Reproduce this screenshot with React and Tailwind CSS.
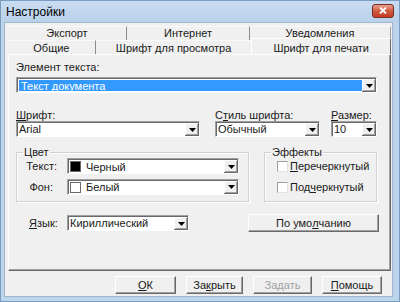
import { useState } from 'react'

const font = { fontFamily: '"Liberation Sans", Arial, sans-serif' }

function Arrow() {
  return (
    <svg width="7" height="4" viewBox="0 0 7 4" className="block">
      <path d="M0 0h7L3.5 4z" fill="#000" />
    </svg>
  )
}

function DropBtn() {
  return (
    <div className="w-[14px] h-full bg-[#f0f0f0] flex items-center justify-center shadow-[inset_-1px_-1px_0_#696969,inset_1px_1px_0_#ffffff,inset_-2px_-2px_0_#a0a0a0]">
      <Arrow />
    </div>
  )
}

function Combo({ width, children, selected }) {
  return (
    <div
      className="h-[16px] flex bg-white border border-t-[#a0a0a0] border-l-[#a0a0a0] border-r-white border-b-white shadow-[inset_1px_1px_0_#696969]"
      style={{ width }}
    >
      <div className={`flex-1 flex items-center pl-[2px] pt-px overflow-hidden ${selected ? 'bg-[#3399ff] text-white ml-[2px] mt-[2px] mb-px' : ''}`}>
        {children}
      </div>
      <div className="pt-px pb-0 h-full">
        <DropBtn />
      </div>
    </div>
  )
}

function Btn({ children, disabled, width }) {
  return (
    <div
      className={`h-[18px] flex items-center justify-center bg-[#f0f0f0] border border-t-white border-l-white border-r-[#696969] border-b-[#696969] shadow-[inset_-1px_-1px_0_#a0a0a0] ${disabled ? 'text-[#a0a0a0]' : 'text-[#1a1a1a]'}`}
      style={{ width }}
    >
      {children}
    </div>
  )
}

function Group({ title, width, children }) {
  return (
    <div
      className="relative h-[50px] border border-[#d0d0d0] shadow-[1px_1px_0_#ffffff,inset_1px_1px_0_#ffffff]"
      style={{ width }}
    >
      <span className="absolute -top-[7px] left-[6px] px-px bg-[#f0f0f0] leading-[12px]">{title}</span>
      {children}
    </div>
  )
}

function Check({ children }) {
  return (
    <div className="flex items-center h-[11px]">
      <div className="w-[11px] h-[11px] bg-white border border-t-[#a0a0a0] border-l-[#a0a0a0] border-r-[#e3e3e3] border-b-[#e3e3e3]" />
      <span className="ml-[2px]">{children}</span>
    </div>
  )
}

function Tab({ width, children, last }) {
  return (
    <div
      className={`h-[14px] flex items-center justify-center border-t border-t-[#fafafa] ${last ? 'border-r border-r-[#a0a0a0]' : 'border-r border-r-[#8c8c8c]'}`}
      style={{ width }}
    >
      {children}
    </div>
  )
}

export default function App() {
  const [tab] = useState(5)

  return (
    <div className="w-[400px] h-[302px] bg-[#bcd4ec] flex flex-col text-[11px] text-[#1a1a1a] border border-[#7a9cc2]" style={font}>
      {/* Title bar */}
      <div className="h-[21px] flex items-center pl-[5px] pr-[5px] bg-gradient-to-b from-[#c9ddf2] to-[#b9d1ea]">
        <span className="text-[12px] leading-[14px] pt-px text-black">Настройки</span>
        <div className="ml-auto w-[22px] h-[14px] mt-[-2px] rounded-[3px] border border-[#7a2b22] bg-gradient-to-b from-[#e9a08f] via-[#cf5b43] to-[#c43c22] flex items-center justify-center">
          <svg width="8" height="7" viewBox="0 0 8 7">
            <path d="M1 0.5l6 6M7 0.5l-6 6" stroke="#fff" strokeWidth="1.8" />
          </svg>
        </div>
      </div>

      {/* Client area */}
      <div className="flex-1 ml-[3px] mr-[6px] mb-[4px] bg-[#f0f0f0] border border-[#a0b6cc] flex flex-col">
        {/* Tabs */}
        <div className="pt-[3px] pl-[3px] pr-px">
          <div className="flex">
            <Tab width={119}>Экспорт</Tab>
            <Tab width={123}>Интернет</Tab>
            <Tab width={141} last>Уведомления</Tab>
          </div>
          <div className="flex h-[14px]">
            <div className="w-[88px] h-[14px] flex items-center justify-center pt-[2px] border-r border-r-[#8c8c8c] border-t border-t-[#fafafa]">Общие</div>
            <div className="w-[156px] h-[14px] flex items-center justify-center pt-[2px] border-t border-t-[#fafafa]">Шрифт для просмотра</div>
            <div className="relative z-10 w-[140px] h-[16px] -mt-[2px] bg-[#f0f0f0] border-l border-l-white border-t border-t-white border-r border-r-[#696969] flex items-start justify-center pt-px">
              {tab === 5 && 'Шрифт для печати'}
            </div>
          </div>
        </div>

        {/* Panel */}
        <div className="ml-[3px] mr-px h-[217px] border border-t-white border-l-white border-r-[#696969] border-b-[#696969] shadow-[inset_-1px_-1px_0_#a0a0a0] pl-[7px] pt-[6px]">
          <div className="h-[13px] leading-[13px]">Элемент текста:</div>
          <div className="mt-[3px]">
            <Combo width={361} selected>Текст документа</Combo>
          </div>

          <div className="mt-[17px] h-[11px] leading-[11px] flex">
            <span className="w-[199px]"><u>Ш</u>рифт:</span>
            <span className="w-[116px]">С<u>т</u>иль шрифта:</span>
            <span><u>Р</u>азмер:</span>
          </div>
          <div className="flex">
            <Combo width={184}>Arial</Combo>
            <div className="ml-[15px]">
              <Combo width={105}>Обычный</Combo>
            </div>
            <div className="ml-[11px]">
              <Combo width={46}>10</Combo>
            </div>
          </div>

          <div className="mt-[15px] flex">
            <Group title="Цвет" width={233}>
              <div className="flex items-center mt-[5px]">
                <span className="w-[50px] text-right pr-[10px]">Текст:</span>
                <Combo width={172}>
                  <span className="w-[11px] h-[11px] bg-black border border-[#696969] mr-[5px] shrink-0" />
                  Черный
                </Combo>
              </div>
              <div className="flex items-center mt-[4px]">
                <span className="w-[50px] text-right pr-[14px]">Фон:</span>
                <Combo width={172}>
                  <span className="w-[11px] h-[11px] bg-white border border-[#696969] mr-[5px] shrink-0" />
                  Белый
                </Combo>
              </div>
            </Group>
            <div className="ml-[15px]">
              <Group title="Эффекты" width={113}>
                <div className="pl-[12px] pt-[8px] flex flex-col gap-[10px]">
                  <Check><u>П</u>еречеркнутый</Check>
                  <Check>Под<u>ч</u>еркнутый</Check>
                </div>
              </Group>
            </div>
          </div>

          <div className="mt-[12px] flex items-center">
            <span className="w-[51px] pl-[13px]"><u>Я</u>зык:</span>
            <Combo width={122}>Кириллический</Combo>
            <div className="ml-[59px]">
              <Btn width={131}>По умо<u>л</u>чанию</Btn>
            </div>
          </div>
        </div>

        {/* Buttons */}
        <div className="mt-[5px] flex pl-[110px] gap-[10px]">
          <Btn width={61}><u>О</u>К</Btn>
          <Btn width={57}>За<u>к</u>рыть</Btn>
          <Btn width={59} disabled>Задать</Btn>
          <Btn width={60}><u>П</u>омощь</Btn>
        </div>
      </div>
    </div>
  )
}
